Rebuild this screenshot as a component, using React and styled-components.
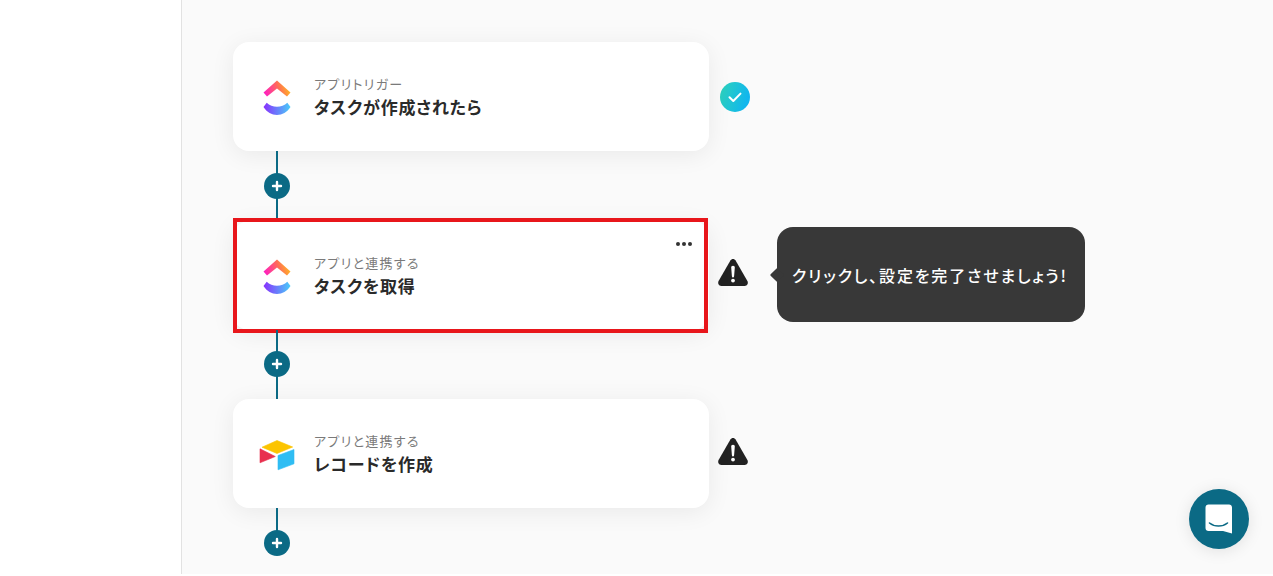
import React from 'react';
import styled, { createGlobalStyle } from 'styled-components';

const Global = createGlobalStyle`
  html, body {
    margin: 0;
    padding: 0;
    height: 100%;
    overflow: hidden;
    background: #fff;
  }
  body {
    font-family: "Noto Sans CJK JP", "Noto Sans", sans-serif;
    color: #2a2a2a;
  }
`;

const Page = styled.div`
  display: flex;
  width: 1273px;
  height: 574px;
  overflow: hidden;
`;
const Side = styled.aside`
  width: 181px;
  flex: none;
  background: #fff;
  border-right: 1px solid #e2e2e2;
`;
const Main = styled.main`
  flex: 1;
  position: relative;
  background: #fafafa;
  padding: 42px 0 0 51px;
`;
const Row = styled.div`
  display: flex;
  align-items: center;
  height: 109px;
`;
const Card = styled.div`
  position: relative;
  display: flex;
  align-items: center;
  box-sizing: border-box;
  width: 476px;
  height: 109px;
  padding-left: 24px;
  background: #fff;
  border-radius: 16px;
  box-shadow: 0 4px 24px rgba(0, 0, 0, 0.07);
`;
const Logo = styled.div`
  width: 40px;
  height: 40px;
  flex: none;
  margin-right: 17px;
  svg {
    display: block;
  }
`;
const Texts = styled.div`
  display: flex;
  flex-direction: column;
  padding-top: 2px;
  font-feature-settings: "palt";
`;
const Label = styled.div`
  font-size: 13px;
  line-height: 18px;
  letter-spacing: 1.27px;
  color: #7a7a7a;
`;
const Title = styled.div`
  font-size: 17px;
  line-height: 28px;
  font-weight: 700;
  letter-spacing: 0.75px;
  color: #2a2a2a;
`;
const Highlight = styled.div`
  position: absolute;
  left: 0;
  top: -3px;
  width: 475px;
  height: 115px;
  box-sizing: border-box;
  border: 4px solid #e8161b;
  pointer-events: none;
`;
const Dots = styled.div`
  position: absolute;
  right: 17px;
  top: 21px;
  display: flex;
  gap: 2px;
  span {
    width: 4px;
    height: 4px;
    border-radius: 50%;
    background: #333;
  }
`;
const Status = styled.div`
  width: 32px;
  height: 32px;
  flex: none;
  margin-left: ${p => p.$left}px;
  margin-top: ${p => p.$top || 0}px;
  svg {
    display: block;
  }
`;
const Connector = styled.div`
  position: relative;
  width: 2px;
  height: ${p => p.$h}px;
  margin-left: 43px;
  background: #0b6a85;
`;
const Plus = styled.div`
  position: absolute;
  left: -12px;
  top: ${p => p.$top}px;
  width: 26px;
  height: 26px;
  border-radius: 50%;
  background: #0b6a85;
  display: flex;
  align-items: center;
  justify-content: center;
`;
const Tip = styled.div`
  position: absolute;
  left: 595px;
  top: 227px;
  width: 308px;
  height: 95px;
  box-sizing: border-box;
  background: #383838;
  border-radius: 16px;
  color: #fff;
  font-size: 16px;
  font-weight: 500;
  font-feature-settings: "palt";
  letter-spacing: 1.85px;
  display: flex;
  align-items: center;
  padding-left: 15px;
  white-space: nowrap;
  &::before {
    content: '';
    position: absolute;
    left: -5px;
    top: 43px;
    width: 10px;
    height: 10px;
    background: #383838;
    transform: rotate(45deg);
    border-radius: 1px;
  }
`;
const Chat = styled.button`
  position: absolute;
  left: 1007px;
  top: 489px;
  width: 60px;
  height: 60px;
  padding: 0;
  border: 0;
  border-radius: 50%;
  background: #0b6a85;
  box-shadow: 0 2px 16px rgba(0, 0, 0, 0.1);
  display: flex;
  align-items: center;
  justify-content: center;
`;

const ClickUp = ({ id }) => (
  <svg width="40" height="40" viewBox="0 0 40 40">
    <defs>
      <linearGradient id={id + 'Top'} x1="0" y1="0.6" x2="1" y2="0.4">
        <stop offset="0" stopColor="#ff1fc0" />
        <stop offset="0.55" stopColor="#ff6a5a" />
        <stop offset="1" stopColor="#ffc11a" />
      </linearGradient>
      <linearGradient id={id + 'Bottom'} x1="0" y1="0" x2="1" y2="0">
        <stop offset="0" stopColor="#8930fd" />
        <stop offset="1" stopColor="#49ccf9" />
      </linearGradient>
    </defs>
    <path d="M6.5 15.5 L20 3.5 L33.5 15.5 L30 19.5 L20 11.5 L10 19.5 Z" fill={`url(#${id}Top)`} />
    <path d="M6.5 30 L9.7 25.8 C15 31 25 31 30.3 25.8 L33.5 30 C27 40.5 13 40.5 6.5 30 Z" fill={`url(#${id}Bottom)`} />
  </svg>
);

const Airtable = () => (
  <svg width="40" height="40" viewBox="0 0 40 40">
    <path d="M5 13.2 L20 6.5 L35.7 13 L20 19.5 Z" fill="#fcc400" stroke="#fcc400" strokeWidth="0.6" strokeLinejoin="round" />
    <path d="M37 15.5 L37 29.8 L21 35.8 L21 21.5 Z" fill="#2fbdf3" stroke="#2fbdf3" strokeWidth="0.6" strokeLinejoin="round" />
    <path d="M3 14.8 L18.3 22.5 L3 28.8 Z" fill="#e8304f" stroke="#e8304f" strokeWidth="0.6" strokeLinejoin="round" />
  </svg>
);

const Check = () => (
  <svg width="32" height="32" viewBox="0 0 32 32">
    <defs>
      <linearGradient id="okGrad" x1="0" y1="0" x2="1" y2="0.3">
        <stop offset="0" stopColor="#2fd3b9" />
        <stop offset="1" stopColor="#10b6ee" />
      </linearGradient>
    </defs>
    <circle cx="16" cy="16" r="15" fill="url(#okGrad)" />
    <path d="M10.5 16.2 L14.3 20 L21.5 12.6" fill="none" stroke="#fff" strokeWidth="2" strokeLinecap="round" strokeLinejoin="round" />
  </svg>
);

const Warn = () => (
  <svg width="32" height="32" viewBox="0 0 32 32">
    <path d="M16 3 C17.1 3 18 3.6 18.6 4.6 L30.4 25 C31.6 27.1 30.2 30 27.7 30 L4.3 30 C1.8 30 0.4 27.1 1.6 25 L13.4 4.6 C14 3.6 14.9 3 16 3 Z" fill="#222" />
    <path d="M14.2 11.6 C14.1 10.5 14.9 9.8 16 9.8 C17.1 9.8 17.9 10.5 17.8 11.6 L17.1 20.2 C17 21 16.6 21.4 16 21.4 C15.4 21.4 15 21 14.9 20.2 Z" fill="#fff" />
    <circle cx="16" cy="24.6" r="1.9" fill="#fff" />
  </svg>
);

const PlusIcon = () => (
  <svg width="12" height="12" viewBox="0 0 12 12">
    <path d="M6 2 V10 M2 6 H10" stroke="#fff" strokeWidth="2.4" strokeLinecap="round" />
  </svg>
);

const ChatIcon = () => (
  <svg width="28" height="30" viewBox="0 0 28 30">
    <path d="M3.5 0.5 H24 C25.7 0.5 27 1.8 27 3.5 L27 29.5 L18 27 L3.5 27 C1.8 27 0.5 25.7 0.5 24 L0.5 3.5 C0.5 1.8 1.8 0.5 3.5 0.5 Z" fill="#fff" />
    <path d="M4.5 19 C9.5 23 17.5 23 22.5 19" fill="none" stroke="#0b6a85" strokeWidth="1.6" strokeLinecap="round" />
  </svg>
);

function Step({ logo, label, title, children }) {
  return (
    <Card>
      <Logo>{logo}</Logo>
      <Texts>
        <Label>{label}</Label>
        <Title>{title}</Title>
      </Texts>
      {children}
    </Card>
  );
}

export default function App() {
  return (
    <>
      <Global />
      <Page>
        <Side />
        <Main>
          <Row>
            <Step logo={<ClickUp id="cuA" />} label="アプリトリガー" title="タスクが作成されたら" />
            <Status $left={10}><Check /></Status>
          </Row>
          <Connector $h={70}>
            <Plus $top={22}><PlusIcon /></Plus>
          </Connector>
          <Row>
            <Step logo={<ClickUp id="cuB" />} label="アプリと連携する" title="タスクを取得">
              <Highlight />
              <Dots><span /><span /><span /></Dots>
            </Step>
            <Status $left={8} $top={-7}><Warn /></Status>
          </Row>
          <Connector $h={69}>
            <Plus $top={21}><PlusIcon /></Plus>
          </Connector>
          <Row>
            <Step logo={<Airtable />} label="アプリと連携する" title="レコードを作成" />
            <Status $left={8} $top={-5}><Warn /></Status>
          </Row>
          <Connector $h={30}>
            <Plus $top={22}><PlusIcon /></Plus>
          </Connector>
          <Tip>クリックし、設定を完了させましょう!</Tip>
          <Chat aria-label="chat"><ChatIcon /></Chat>
        </Main>
      </Page>
    </>
  );
}
